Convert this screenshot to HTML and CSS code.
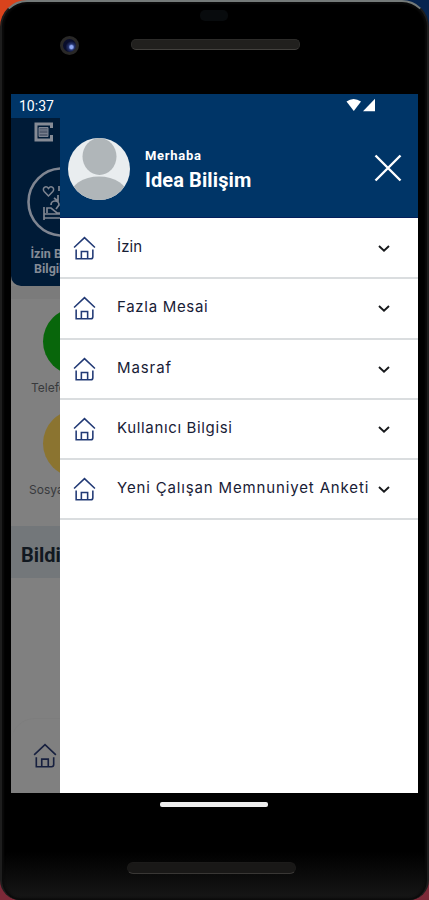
FILE: index.html
```html
<!DOCTYPE html>
<html lang="tr">
<head>
<meta charset="utf-8">
<title>Idea Bilişim</title>
<link rel="stylesheet" href="styles.css">
</head>
<body>
<svg class="defs" width="0" height="0">
  <symbol id="home" viewBox="0 0 22 23">
    <path d="M1 11 11 1.5 21 11" fill="none" stroke="currentColor" stroke-width="1.5"/>
    <path d="M3 13V21.8H17Q19 21.8 19 19.8V13M8 21.5V14.8H14V21.5" fill="none" stroke="currentColor" stroke-width="1.5"/>
  </symbol>
  <symbol id="chevron" viewBox="0 0 14 9">
    <path d="M2 2 7 6.8 12 2" fill="none" stroke="currentColor" stroke-width="1.9"/>
  </symbol>
</svg>
<div class="phone">
  <div class="bezel-top">
    <span class="sensor"></span>
    <span class="camera"></span>
    <span class="speaker"></span>
  </div>
  <div class="screen">
    <div class="status">
      <span>10:37</span>
      <svg class="signals" viewBox="0 0 30 14" width="30" height="14">
        <path d="M.5 3.5Q7.5-1.7 15 3.5L7.8 13Z" fill="#fff"/>
        <path d="M17 13.2H29V.7Z" fill="#fff"/>
      </svg>
    </div>
    <div class="content">
      <div class="page">
        <div class="hero">
          <svg class="logo" width="19" height="20" viewBox="0 0 19 20">
            <path d="M17.5 6V2H2V18H17.5V13" fill="none" stroke="#868b95" stroke-width="3"/>
            <path d="M5 5.5H14V14.5H5Z" fill="#555e70" stroke="#808794"/>
            <path d="M5 8H14M5 11.5H14" stroke="#777e8d"/>
          </svg>
          <div class="round">
            <svg width="70" height="70" viewBox="0 0 70 70">
              <circle cx="35" cy="35" r="33.5" fill="none" stroke="#7f8591" stroke-width="2.6"/>
              <path d="M21.5 29 17.2 24.5C14.5 21 19 18 21.5 21.5 24 18 28.5 21 25.8 24.5Z" fill="none" stroke="#7f8591" stroke-width="1.5"/>
              <path d="M17 40V53M17 51H36M17 47H36M20 46V41H24L30 46H36M24 38A4 4 0 0 1 32 38L29 42M27 31 31 34V28M32 19V24" fill="none" stroke="#7f8591" stroke-width="1.7"/>
            </svg>
          </div>
          <p class="hero-label">İzin Bakiye<br>Bilgilerim</p>
        </div>
        <div class="shortcuts">
          <div class="dot green"></div>
          <p>Telefon</p>
          <div class="dot yellow"></div>
          <p class="social">Sosyal</p>
        </div>
        <h2>Bildirimler</h2>
        <div class="feed"></div>
        <div class="tabs"><svg width="24" height="25"><use href="#home"/></svg></div>
      </div>
      <div class="drawer">
        <header>
          <svg class="avatar" width="62" height="62" viewBox="0 0 62 62">
            <clipPath id="round"><circle cx="31" cy="31" r="31"/></clipPath>
            <g clip-path="url(#round)">
              <rect width="62" height="62" fill="#e9edef"/>
              <ellipse cx="31.5" cy="18.5" rx="17" ry="18.5" fill="#b0b6b9"/>
              <ellipse cx="31" cy="58" rx="29" ry="19.5" fill="#b0b6b9"/>
            </g>
          </svg>
          <div class="who"><span>Merhaba</span><b>Idea Bilişim</b></div>
          <svg class="close" width="28" height="28" viewBox="0 0 28 28"><path d="M1.5 1.5 26.5 26.5M26.5 1.5 1.5 26.5" stroke="#fff" stroke-width="2.4"/></svg>
        </header>
        <ul>
          <li><svg class="home"><use href="#home"/></svg><span class="l1">İzin</span><svg class="chev"><use href="#chevron"/></svg></li>
          <li><svg class="home"><use href="#home"/></svg><span class="l2">Fazla Mesai</span><svg class="chev"><use href="#chevron"/></svg></li>
          <li><svg class="home"><use href="#home"/></svg><span class="l3">Masraf</span><svg class="chev"><use href="#chevron"/></svg></li>
          <li><svg class="home"><use href="#home"/></svg><span class="l4">Kullanıcı Bilgisi</span><svg class="chev"><use href="#chevron"/></svg></li>
          <li><svg class="home"><use href="#home"/></svg><span class="l5">Yeni Çalışan Memnuniyet Anketi</span><svg class="chev"><use href="#chevron"/></svg></li>
        </ul>
      </div>
    </div>
  </div>
  <div class="bezel-bottom">
    <span class="gesture"></span>
    <span class="speaker low"></span>
  </div>
</div>
</body>
</html>
```
FILE: styles.css
```css
* { box-sizing: border-box; }
body {
  margin: 0;
  width: 429px;
  height: 900px;
  overflow: hidden;
  background: linear-gradient(90deg, #d9431c 0 50%, #06244f 50%) 0 0 / 100% 50px no-repeat, #7c2938;
  font-family: Roboto, sans-serif;
}
h2, p, ul { margin: 0; padding: 0; }
svg { display: block; flex: none; }
.defs { position: absolute; }
.phone {
  width: 429px;
  height: 900px;
  padding: 0 9px 0 9px;
  display: flex;
  flex-direction: column;
  background: linear-gradient(#000 0 850px, #181818 900px);
  border: 2px solid #1d1d1d;
  border-top-color: #747a79;
  border-bottom: 0;
  border-radius: 27px 27px 20px 20px;
  box-shadow: inset 0 0 2px 2px #0b0b0b;
}
.bezel-top {
  height: 92px;
  flex: none;
  display: grid;
  grid-template-columns: 49px 20px 51px 169px;
  grid-template-rows: 8px 12px 14px 21px;
}
.sensor {
  grid-column: 4;
  grid-row: 2;
  width: 28px;
  height: 11px;
  margin-left: 69px;
  border-radius: 5px;
  background: #080b0d;
}
.camera {
  grid-column: 2;
  grid-row: 4;
  width: 19px;
  height: 19px;
  border: 3px solid #292827;
  border-radius: 50%;
  background: radial-gradient(circle at 65% 62%, #8fa8f4 0 1.5px, #26346f 3px, #090d2b 6px);
}
.speaker {
  grid-column: 4;
  grid-row: 4;
  width: 169px;
  height: 11px;
  margin-top: 3px;
  border: 1px solid #2c2b29;
  border-bottom-color: #43413e;
  border-radius: 5px;
  background: #21201e;
}
.screen {
  width: 407px;
  height: 699px;
  flex: none;
  display: flex;
  flex-direction: column;
  background: #fff;
}
.status {
  height: 24px;
  flex: none;
  display: flex;
  justify-content: space-between;
  align-items: center;
  padding: 0 42px 0 8px;
  background: #003567;
  color: #fff;
  font-size: 14px;
}
.signals { margin-top: -2px; }
.content { display: flex; flex: 1; min-height: 0; }
.page {
  width: 49px;
  overflow: hidden;
  display: flex;
  flex-direction: column;
  background: #808080;
}
.hero {
  width: 385px;
  height: 168px;
  flex: none;
  background: #001b37;
  border-bottom-left-radius: 10px;
}
.logo { margin: 4px 0 0 23px; }
.round { margin: 25px 0 0 16px; }
.hero-label {
  width: 70px;
  margin: 9px 0 0 15px;
  color: #858b96;
  font-size: 12.5px;
  font-weight: 700;
  line-height: 15px;
  text-align: center;
  white-space: nowrap;
}
.shortcuts {
  height: 241px;
  width: 385px;
  flex: none;
  padding: 9px 0 0 18px;
  border-top: 13px solid #7b7b7b;
  font: 12px/16px Inter, sans-serif;
  color: #383a3d;
}
.shortcuts p { margin: 5px 0 0 2px; }
.shortcuts p.social { margin: 5px 0 0 0; }
.dot { width: 67px; height: 67px; margin-left: 14px; border-radius: 50%; }
.green { background: #08660b; }
.yellow { background: #8b7430; margin-top: 14px; }
h2 {
  width: 385px;
  height: 52px;
  flex: none;
  margin-top: -1px;
  padding-left: 10px;
  background: #73777a;
  color: #111820;
  font-size: 20px;
  line-height: 58px;
}
.feed { flex: 1; }
.tabs {
  width: 385px;
  height: 75px;
  flex: none;
  padding: 24px 0 0 22px;
  border-top: 1px solid #7d7d7d;
  border-top-left-radius: 24px;
  color: #17203f;
}
.drawer { width: 358px; flex: none; background: #fff; }
header {
  height: 100px;
  display: flex;
  align-items: flex-start;
  background: #003567;
  border-bottom: 1px solid #05205c;
  color: #fff;
}
.avatar { margin: 20px 0 0 8px; }
.who {
  flex: 1;
  margin: 29px 0 0 15px;
  display: flex;
  flex-direction: column;
  white-space: nowrap;
}
.who span { font-size: 13px; font-weight: 700; line-height: 17px; letter-spacing: .7px; }
.who b { margin-top: 3px; font-size: 20px; line-height: 26px; letter-spacing: .1px; }
.close { margin: 36px 16px 0 0; }
ul { list-style: none; padding-top: 1px; }
li {
  height: 60.25px;
  display: flex;
  align-items: flex-start;
  border-bottom: 2px solid #dadddf;
  padding-left: 13px;
  color: #182036;
}
.home { width: 23px; height: 24px; margin-top: 17px; color: #223a75; }
li span {
  width: 260px;
  margin: 17px 0 0 21px;
  font: 15px/22px Inter, sans-serif;
  white-space: nowrap;
}
.l1 { letter-spacing: .1px; }
.l2 { letter-spacing: .7px; }
.l3 { letter-spacing: .9px; }
.l4 { letter-spacing: .65px; }
.l5 { letter-spacing: .85px; }
.chev { width: 14px; height: 9px; margin-top: 25px; color: #17191c; }
.bezel-bottom {
  flex: 1;
  display: flex;
  flex-direction: column;
  padding-left: 116px;
}
.gesture {
  width: 108px;
  height: 5px;
  margin: 9px 0 0 33px;
  border-radius: 2px;
  background: #eee;
}
.low {
  height: 12px;
  margin-top: 55px;
  border-radius: 6px;
  background: #191817;
  border-color: #1c1b1a;
  border-bottom-color: #393735;
}
```
